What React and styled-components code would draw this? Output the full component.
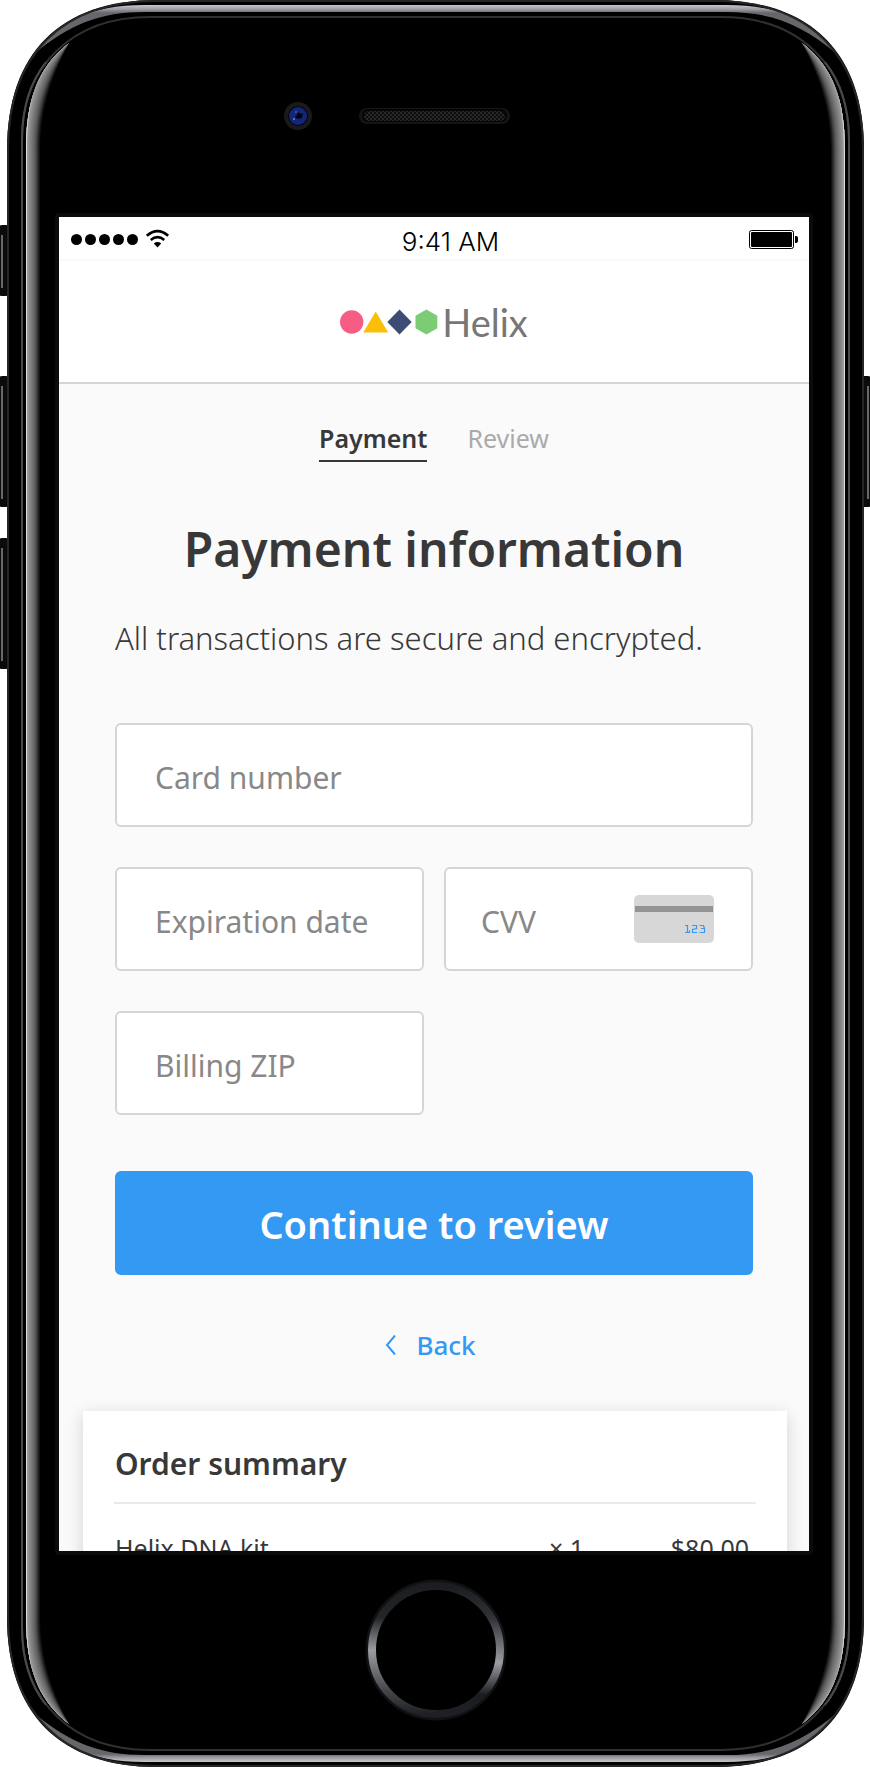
import React from "react";
import styled, { createGlobalStyle } from "styled-components";

const GlobalStyle = createGlobalStyle`
  *, *::before, *::after { box-sizing: border-box; }
  body { margin: 0; background: #fff; color: #383838; font-family: "Noto Sans", "Open Sans", sans-serif; }
  h1, h2, p { margin: 0; }
  a { text-decoration: none; color: inherit; }
`;

const Phone = styled.div`
  position: relative;
  padding: 213px 57px 212px 55px;
`;

const FrameArt = styled.svg`
  position: absolute;
  inset: 0;
  width: 100%;
  height: 100%;
  display: block;
`;

const Screen = styled.main`
  position: relative;
  border: 4px solid #0a0b0c;
  border-radius: 4px;
  aspect-ratio: 758 / 1342;
  min-height: 0;
  overflow: hidden;
  background: #fafafa;
`;

const StatusBar = styled.div`
  display: grid;
  grid-template-columns: 1fr auto 1fr;
  align-items: center;
  height: 44px;
  padding: 2px 11px 0 12px;
  background: #fff;
  border-bottom: 2px solid #f9f9f9;
`;

const Signal = styled.svg`
  display: block;
`;

const Battery = styled.svg`
  display: block;
  justify-self: end;
`;

const Clock = styled.time`
  padding: 6px 0 0 32px;
  font: 300 26px/30px Inter, sans-serif;
  color: #000;
`;

const Header = styled.header`
  display: flex;
  align-items: center;
  justify-content: center;
  gap: 4px;
  height: 123px;
  background: #fff;
  border-bottom: 2px solid #d5d5d5;
`;

const Brand = styled.span`
  font: 400 38px/48px Lato, sans-serif;
  color: #777;
`;

const Content = styled.div`
  padding: 34px 56px 0;
`;

const Steps = styled.nav`
  display: flex;
  justify-content: center;
  gap: 40px;
  font-size: 25px;
  line-height: 40px;
`;

const Step = styled.a`
  height: 44px;
  font-weight: ${(p) => (p.$current ? 600 : 400)};
  color: ${(p) => (p.$current ? "#383838" : "#aaa")};
  border-bottom: 2px solid ${(p) => (p.$current ? "#383838" : "transparent")};
`;

const Title = styled.h1`
  margin-top: 52px;
  font-size: 48px;
  line-height: 70px;
  font-weight: 600;
  text-align: center;
`;

const Lead = styled.p`
  margin-top: 34px;
  font-size: 31px;
  line-height: 40px;
  font-weight: 300;
`;

const Form = styled.form`
  display: grid;
  grid-template-columns: 1fr 1fr;
  gap: 40px 20px;
  margin-top: 65px;
`;

const Field = styled.div`
  grid-column: ${(p) => (p.$wide ? "1 / -1" : "auto")};
  display: flex;
  align-items: center;
  height: 104px;
  padding: 0 37px 0 ${(p) => (p.$tight ? 35 : 38)}px;
  background: #fff;
  border: 2px solid #d5d5d5;
  border-radius: 6px;
`;

const Input = styled.input`
  flex: 1;
  width: 100%;
  min-width: 0;
  height: 100%;
  padding: 4px 0 0;
  border: 0;
  outline: 0;
  background: none;
  font: 400 30px/40px "Noto Sans", "Open Sans", sans-serif;
  color: #383838;
  &::placeholder { color: #888; opacity: 1; }
`;

const Submit = styled.button`
  grid-column: 1 / -1;
  height: 104px;
  margin-top: 16px;
  padding: 2px 0 0;
  border: 0;
  border-radius: 6px;
  background: #3399f3;
  color: #fff;
  font: 600 38px/50px "Noto Sans", "Open Sans", sans-serif;
`;

const BackLink = styled.a`
  display: flex;
  align-items: center;
  justify-content: center;
  gap: 20px;
  width: max-content;
  margin: 52px auto 0;
  padding-right: 8px;
  color: #3399f3;
  font-size: 26px;
  line-height: 36px;
  font-weight: 500;
`;

const Summary = styled.section`
  margin: 48px 22px 0 24px;
  padding: 32px 31px;
  background: #fff;
  box-shadow: 0 4px 16px rgba(0, 0, 0, 0.16);
`;

const SummaryTitle = styled.h2`
  padding: 1px 1px 18px;
  border-bottom: 2px solid #eaeaea;
  font-size: 30px;
  line-height: 40px;
  font-weight: 600;
`;

const Items = styled.table`
  width: 100%;
  margin-top: 26px;
  border-collapse: collapse;
  font-size: 25px;
  line-height: 36px;
`;

const Cell = styled.td`
  width: ${(p) => p.$width || "auto"};
  padding: 0 7px 0 1px;
  text-align: ${(p) => p.$align || "left"};
`;

/* The side glare is built from nested crescents, darkest and widest first. */
const GLARE = [
  [15, 18], [14, 34], [13, 52], [12, 70], [11, 84], [10, 96], [9, 106], [8, 114],
  [7, 122], [6, 130], [5, 138], [4, 146], [3, 156], [2, 222],
];

function Corner({ flip }) {
  return (
    <g transform={flip}>
      <path d="M34 54C58 22 88 5 145 5V12C100 12 70 24 34 54Z" fill="url(#rim)" />
      <path d="M145 5H436V12H145Z" fill="url(#rim)" />
      {GLARE.map(([w, tone]) => (
        <path
          key={w}
          d={`M69 43C38 67 26 100 26 150V884H${25 + w}V150C${25 + w} ${100 + w} ${33 + w} ${67 + w} 69 43Z`}
          fill={`rgb(${tone},${tone},${tone})`}
        />
      ))}
      <path d="M22 884V140C22 66 72 17 150 17H436" fill="none" stroke="#303030" strokeWidth="2" />
      <path d="M22 884V140C22 110 30 82 46 62" fill="none" stroke="#4a4a4a" strokeWidth="2" />
      <path d="M8 884V150C8 54 62 1 157 1H436" fill="none" stroke="#262626" strokeWidth="2" />
    </g>
  );
}

function SideKey({ x, y, h, left }) {
  return (
    <g>
      <rect x={x} y={y} width="10" height={h} rx="3" fill="#0b0b0b" />
      <rect x={left ? 1 : 867} y={y + 10} width="2" height={h - 18} fill="#686868" />
    </g>
  );
}

function PhoneFrame() {
  return (
    <FrameArt viewBox="0 0 870 1767" preserveAspectRatio="none" aria-hidden="true">
      <defs>
        <linearGradient id="rim" gradientUnits="userSpaceOnUse" x1="0" y1="4" x2="0" y2="13">
          <stop offset="0" stopColor="#d0d1d6" />
          <stop offset="0.6" stopColor="#9b9ca1" />
          <stop offset="1" stopColor="#66676a" />
        </linearGradient>
        <linearGradient id="ringLeft" x1="0" y1="0" x2="0" y2="1">
          <stop offset="0" stopColor="#1c1d21" />
          <stop offset="0.25" stopColor="#25262a" />
          <stop offset="0.5" stopColor="#9b9ca2" />
          <stop offset="0.8" stopColor="#4a4b4e" />
          <stop offset="1" stopColor="#1f2023" />
        </linearGradient>
        <linearGradient id="ringRight" x1="0" y1="0" x2="0" y2="1">
          <stop offset="0" stopColor="#1c1d21" />
          <stop offset="0.25" stopColor="#303236" />
          <stop offset="0.6" stopColor="#9b9ca2" />
          <stop offset="0.85" stopColor="#1b1c20" />
          <stop offset="1" stopColor="#1f2023" />
        </linearGradient>
        <pattern id="mesh" width="4" height="4" patternUnits="userSpaceOnUse">
          <rect width="4" height="4" fill="#0d0d0d" />
          <circle cx="1" cy="1" r="1" fill="#303030" />
          <circle cx="3" cy="3" r="1" fill="#303030" />
        </pattern>
      </defs>
      <SideKey x={-1} y={225} h={71} left />
      <SideKey x={-1} y={376} h={131} left />
      <SideKey x={-1} y={538} h={131} left />
      <SideKey x={861} y={376} h={131} />
      <path
        d="M7 150C7 53 60 0 157 0H714C811 0 864 53 864 150V1617C864 1714 811 1767 714 1767H157C60 1767 7 1714 7 1617Z"
        fill="#000"
      />
      <Corner />
      <Corner flip="translate(871 0) scale(-1 1)" />
      <Corner flip="translate(0 1767) scale(1 -1)" />
      <Corner flip="translate(871 1767) scale(-1 -1)" />
      <circle cx="298" cy="116" r="14" fill="#1a1a1a" />
      <circle cx="298" cy="116" r="10" fill="#05060c" />
      <circle cx="298" cy="116" r="9" fill="#12277c" />
      <path d="M295 117l2-2 1-3 3 2 2-1-1 5-4 1z" fill="#05060c" />
      <circle cx="294" cy="119" r="1" fill="#6d84c8" />
      <circle cx="296" cy="112" r="1" fill="#4860b0" />
      <rect x="359" y="108" width="151" height="16" rx="8" fill="#151515" />
      <rect x="362" y="109" width="145" height="13" rx="6" fill="#050505" />
      <rect x="364" y="111" width="141" height="10" rx="5" fill="url(#mesh)" />
      <circle cx="436" cy="1650" r="69" fill="none" stroke="#101113" strokeWidth="3" />
      <path d="M436 1586A64 64 0 0 0 436 1714" fill="none" stroke="url(#ringLeft)" strokeWidth="8" />
      <path d="M436 1586A64 64 0 0 1 436 1714" fill="none" stroke="url(#ringRight)" strokeWidth="8" />
    </FrameArt>
  );
}

function SignalIcon() {
  return (
    <Signal width="100" height="20" viewBox="0 0 100 20" aria-label="Signal and Wi-Fi">
      {[5, 19, 33, 47, 61].map((x) => (
        <circle key={x} cx={x + 0.5} cy="10.5" r="5.5" />
      ))}
      <g fill="none" stroke="#000" strokeWidth="2.6">
        <path d="M75.8 6.8Q86.5 -2.6 97.2 6.8" />
        <path d="M79.8 11Q86.5 5.4 93.2 11" />
      </g>
      <path d="M82.8 14.5Q86.5 11.6 90.2 14.5L86.5 18.6Z" />
    </Signal>
  );
}

function BatteryIcon() {
  return (
    <Battery width="49" height="20" viewBox="0 0 49 20" aria-label="Battery full">
      <rect x="0.5" y="1.5" width="44" height="18" rx="2" fill="none" stroke="#000" />
      <rect x="2" y="3" width="41" height="15" rx="1" />
      <path d="M46 7H47Q49 7 49 9V12Q49 14 47 14H46Z" />
    </Battery>
  );
}

function LogoShapes() {
  return (
    <svg width="98" height="26" viewBox="0 0 98 26" aria-hidden="true">
      <circle cx="11.7" cy="13" r="11.7" fill="#f65c84" />
      <path d="M35.7 2.5L48.2 23.5H23.2Z" fill="#fbbf0a" />
      <path d="M59.5 0.5L71.7 13L59.5 25.4L47.3 13Z" fill="#3e4c75" />
      <path d="M86.4 0.5L97.3 6.7V19.3L86.4 25.4L75.5 19.3V6.7Z" fill="#7bcc74" />
    </svg>
  );
}

function CvvCard() {
  return (
    <svg width="80" height="48" viewBox="0 0 80 48" aria-hidden="true">
      <rect width="80" height="48" rx="5" fill="#d7d7d7" />
      <rect x="1" y="11" width="78" height="6" fill="#949494" />
      <g fill="none" stroke="#3399f3" strokeWidth="1.2">
        <path d="M51 30.5H53.5V37.5M51 37.5H55.5V35.5" />
        <path d="M58 30.5H62.5V33.5L58.5 34.5V37.5H63" />
        <path d="M65.5 30.5H69.5L70.5 33.5H67M70.5 33.5V37.5H65.5" />
      </g>
    </svg>
  );
}

export default function App() {
  return (
    <>
      <GlobalStyle />
      <Phone>
        <PhoneFrame />
        <Screen>
          <StatusBar>
            <SignalIcon />
            <Clock>9:41 AM</Clock>
            <BatteryIcon />
          </StatusBar>
          <Header>
            <LogoShapes />
            <Brand>Helix</Brand>
          </Header>
          <Content>
            <Steps aria-label="Checkout steps">
              <Step href="#payment" $current aria-current="step">Payment</Step>
              <Step href="#review">Review</Step>
            </Steps>
            <Title>Payment information</Title>
            <Lead>All transactions are secure and encrypted.</Lead>
            <Form onSubmit={(e) => e.preventDefault()}>
              <Field $wide>
                <Input aria-label="Card number" placeholder="Card number" inputMode="numeric" />
              </Field>
              <Field>
                <Input aria-label="Expiration date" placeholder="Expiration date" />
              </Field>
              <Field $tight>
                <Input aria-label="CVV" placeholder="CVV" inputMode="numeric" />
                <CvvCard />
              </Field>
              <Field>
                <Input aria-label="Billing ZIP" placeholder="Billing ZIP" />
              </Field>
              <Submit type="submit">Continue to review</Submit>
            </Form>
            <BackLink href="#back">
              <svg width="12" height="20" viewBox="0 0 12 20" fill="none" stroke="currentColor" strokeWidth="2" aria-hidden="true">
                <path d="M11 0.5L3 10L11 19.5" />
              </svg>
              Back
            </BackLink>
          </Content>
          <Summary>
            <SummaryTitle>Order summary</SummaryTitle>
            <Items>
              <tbody>
                <tr>
                  <Cell>Helix DNA kit</Cell>
                  <Cell $width="60px" $align="right">× 1</Cell>
                  <Cell $width="165px" $align="right">$80.00</Cell>
                </tr>
              </tbody>
            </Items>
          </Summary>
        </Screen>
      </Phone>
    </>
  );
}
